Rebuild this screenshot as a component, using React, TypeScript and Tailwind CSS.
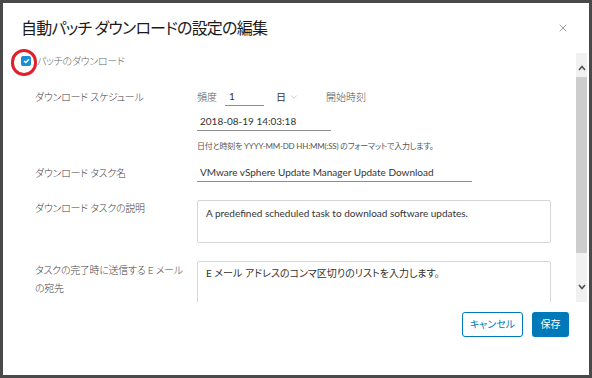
import { X, ChevronDown } from 'lucide-react'

const JP = "font-['Lato','Noto_Sans_CJK_JP',sans-serif] [font-feature-settings:'palt']"

function Scrollbar() {
  return (
    <div className="w-[11px] h-full bg-[#f1f1f1] flex flex-col items-center">
      <div className="h-[24px] w-full flex items-center justify-center pt-[6px]">
        <svg width="8" height="6" viewBox="0 0 8 6">
          <polyline points="1,5 4,1.5 7,5" fill="none" stroke="#505050" strokeWidth="1.6" />
        </svg>
      </div>
      <div className="w-full h-[176px] bg-[#cdcdcd]" />
      <div className="flex-1" />
      <div className="h-[26px] w-full flex items-center justify-center pb-[4px]">
        <svg width="8" height="6" viewBox="0 0 8 6">
          <polyline points="1,1 4,4.5 7,1" fill="none" stroke="#505050" strokeWidth="1.6" />
        </svg>
      </div>
    </div>
  )
}

export default function App() {
  return (
    <div className={`w-[592px] h-[378px] bg-[#4a4a4a] p-[3px] ${JP}`}>
      <div className="relative w-full h-full bg-white flex flex-col">
        {/* Header */}
        <div className="h-[50px] flex items-center justify-between pl-[18px] pr-[20px] shrink-0">
          <h1 className="text-[16px] text-[#1b1b1b] tracking-[-0.8px]">自動パッチ ダウンロードの設定の編集</h1>
          <X className="w-[12px] h-[12px] text-[#666]" strokeWidth={1.3} />
        </div>

        {/* Body */}
        <div className="h-[249px] flex shrink-0">
          <div className="flex-1 overflow-hidden">
            <div className="flex items-center gap-[6px] ml-[18px] mt-[3px] h-[10px]">
              <div className="w-[10px] h-[10px] rounded-[2px] bg-[#1a8cd8] flex items-center justify-center">
                <svg width="7" height="6" viewBox="0 0 7 6">
                  <polyline points="1,3 2.8,4.6 6,1.2" fill="none" stroke="white" strokeWidth="1.4" />
                </svg>
              </div>
              <span className="text-[10px] tracking-[-0.3px] font-light text-[#666]">パッチのダウンロード</span>
            </div>

            <div className="pl-[32px] text-[10px] text-[#444]">
              {/* Schedule */}
              <div className="flex mt-[22px]">
                <div className="w-[162px] h-[18px] flex items-center tracking-[-0.3px] font-light">ダウンロード スケジュール</div>
                <div className="flex flex-col">
                  <div className="flex items-center h-[18px]">
                    <span className="text-[#555] font-light">頻度</span>
                    <div className="ml-[8px] w-[39px] h-[18px] border-b border-[#8e8e8e] pl-[4px] flex items-center text-[#333]">1</div>
                    <span className="ml-[12px] text-[#333]">日</span>
                    <ChevronDown className="ml-[3px] w-[10px] h-[10px] text-[#aaa]" strokeWidth={1.5} />
                    <span className="ml-[27px] text-[#555] font-light">開始時刻</span>
                  </div>
                  <div className="mt-[7px] w-[134px] h-[18px] border-b border-[#8e8e8e] pl-[3px] flex items-center text-[#333]">
                    2018-08-19 14:03:18
                  </div>
                  <div className="mt-[9px] text-[8px] leading-[12px] tracking-[-0.2px] text-[#555]">
                    日付と時刻を YYYY-MM-DD HH:MM(:SS) のフォーマットで入力します。
                  </div>
                </div>
              </div>

              {/* Task name */}
              <div className="flex mt-[12px]">
                <div className="w-[162px] h-[18px] flex items-center tracking-[-0.3px] font-light">ダウンロード タスク名</div>
                <div className="w-[275px] h-[18px] border-b border-[#8e8e8e] pl-[3px] flex items-center text-[#333]">
                  VMware vSphere Update Manager Update Download
                </div>
              </div>

              {/* Description */}
              <div className="flex mt-[18px]">
                <div className="w-[162px] leading-[16px] tracking-[-0.3px] font-light">ダウンロード タスクの説明</div>
                <div className="w-[354px] h-[43px] border border-[#d6d6d6] rounded-[2px] px-[8px] pt-[5px] leading-[14px] text-[#333]">
                  A predefined scheduled task to download software updates.
                </div>
              </div>

              {/* Email */}
              <div className="flex mt-[18px]">
                <div className="w-[162px] leading-[18px] whitespace-nowrap tracking-[-0.3px] font-light">
                  タスクの完了時に送信する E メール
                  <br />
                  の宛先
                </div>
                <div className="w-[354px] h-[60px] border border-[#d6d6d6] rounded-[2px] px-[8px] pt-[4px] leading-[14px] text-[#333]">
                  E メール アドレスのコンマ区切りのリストを入力します。
                </div>
              </div>
            </div>
          </div>
          <div className="mr-[2px]">
            <Scrollbar />
          </div>
        </div>

        {/* Footer */}
        <div className="flex-1 flex justify-end items-start gap-[9px] pt-[10px] pr-[20px]">
          <button className="w-[61px] h-[25px] border border-[#0079b8] rounded-[3px] text-[10px] text-[#0079b8] bg-white">
            キャンセル
          </button>
          <button className="w-[37px] h-[25px] rounded-[3px] text-[10px] text-white bg-[#0079b8]">
            保存
          </button>
        </div>

        {/* Annotation circle */}
        <div className="absolute left-[8px] top-[46px] w-[26px] h-[27px] rounded-full border-[3px] border-[#e0202a]" />
      </div>
    </div>
  )
}
